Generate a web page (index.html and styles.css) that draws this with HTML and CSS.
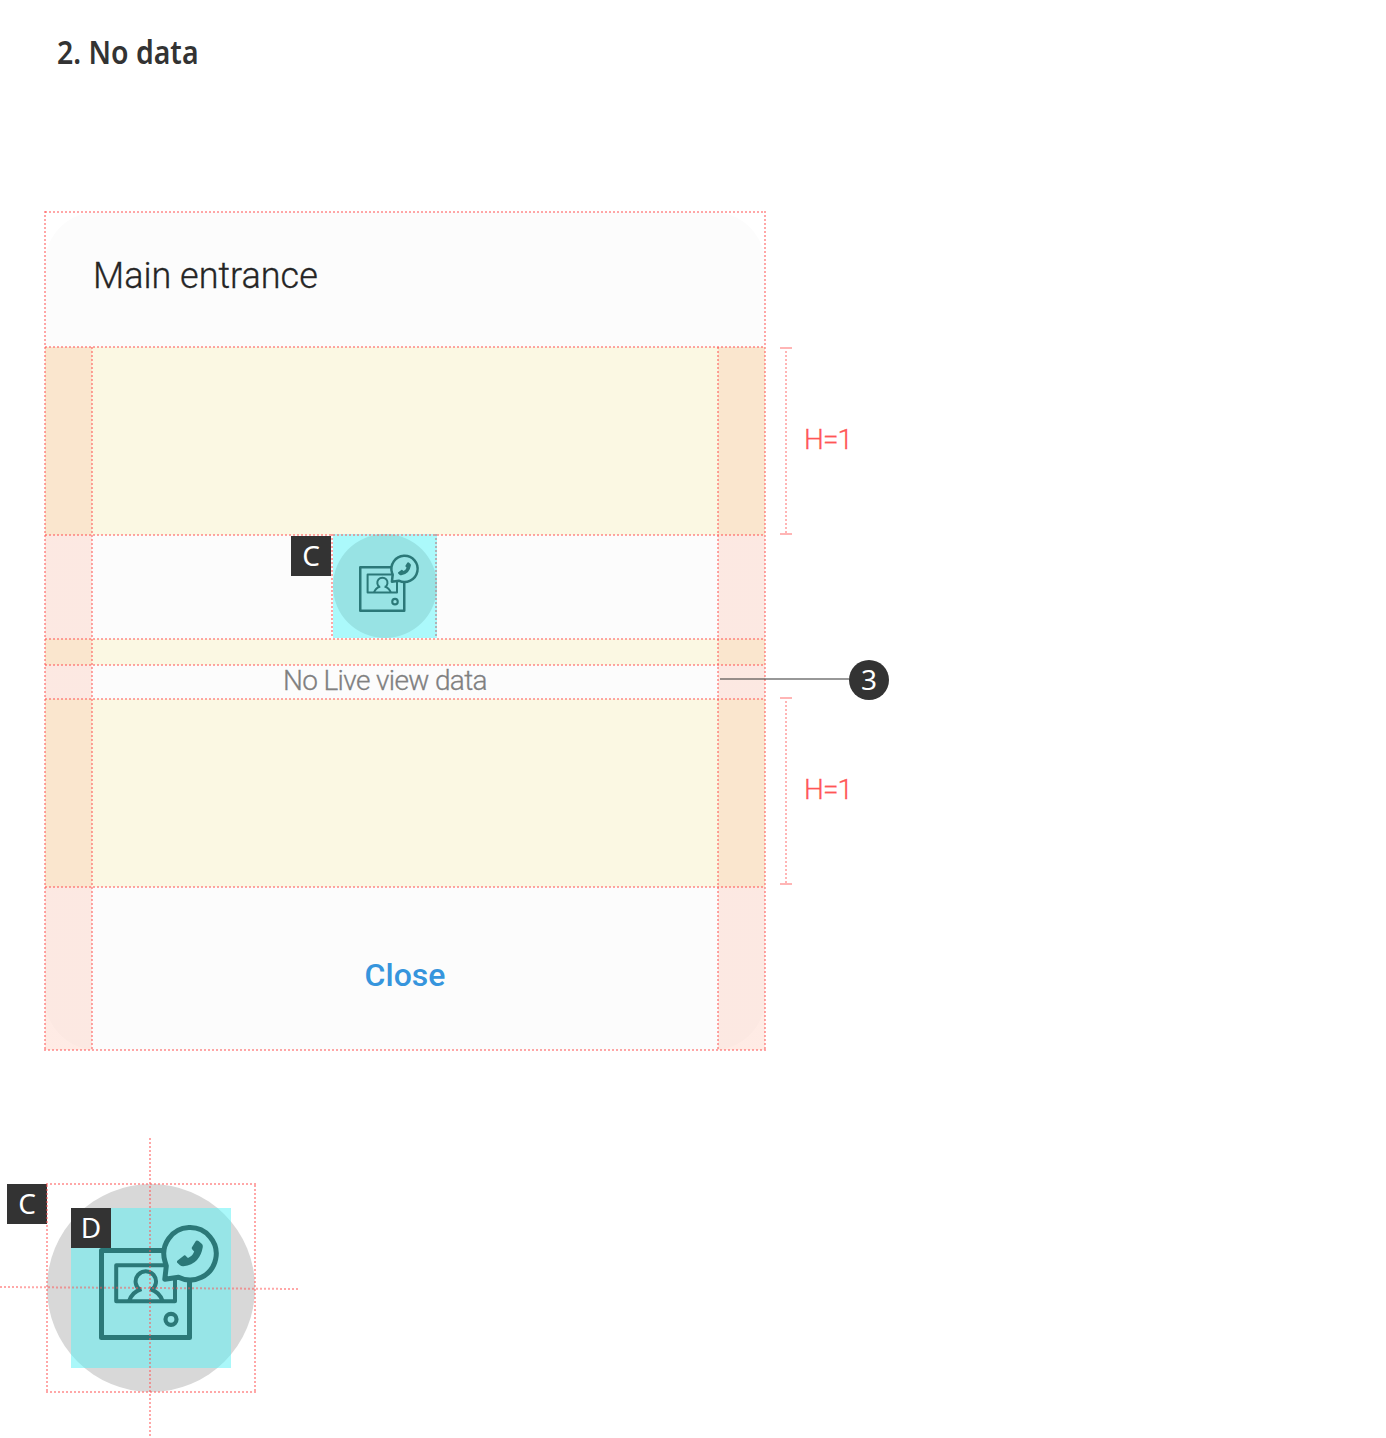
FILE: index.html
```html
<!DOCTYPE html>
<html lang="en">
<head>
<meta charset="utf-8">
<title>No data</title>
<link rel="stylesheet" href="styles.css">
</head>
<body>
<svg class="defs" aria-hidden="true">
  <symbol id="doorphone" viewBox="0 0 160 160">
    <g fill="none" stroke="#2b7878" stroke-linejoin="round">
      <path stroke-width="5" d="M92 42.5H30.5V129.5H118.5V73"/>
      <path stroke-width="4" d="M97 57.2H45.2V93.2H104V71"/>
      <path stroke-width="4" d="M69.5 82.2A10.2 10.2 0 1 1 80.1 82.2M70.5 81Q61 84 58 93.2M79.1 81Q88.500 84 91.700 93.2"/>
      <circle stroke-width="4.2" cx="100" cy="111.3" r="5.5"/>
      <path stroke-width="5" d="M107.5 69.3A26.2 26.2 0 1 0 94 53.5L95.3 58 93.8 71.3Z"/>
    </g>
    <path fill="#2b7878" d="M106 53L113.3 47.3Q114.7 47 115.8 49L117 50Q121.5 48 123.2 43.5L121.5 41.7Q120.3 40.5 120.8 39.5L124.5 33.5Q125.5 32 127.5 33L131 36Q132 37 131.8 39Q130.5 47 126 52Q121 57.5 112.5 58.3Q110.5 58.5 109 57.3L106 54.5Z"/>
  </symbol>
</svg>

<h1 class="heading"><span>2. No data</span></h1>

<main class="board">
  <div class="surface"></div>
  <header class="row row-title">Main entrance</header>
  <div class="row space banded"></div>
  <div class="row banded row-icon">
    <span class="tag">C</span>
    <div class="icon-box">
      <div class="disc"></div>
      <svg class="icon"><use href="#doorphone"/></svg>
    </div>
  </div>
  <div class="row space banded"></div>
  <div class="row banded row-text"><span>No Live view data</span></div>
  <div class="row space banded"></div>
  <footer class="row banded row-close"><span>Close</span></footer>
  <div class="measure measure-top"><i class="ruler"></i><span>H=1</span></div>
  <div class="callout"><i class="leader"></i><b class="number">3</b></div>
  <div class="measure measure-bottom"><i class="ruler"></i><span>H=1</span></div>
  <div class="guides"></div>
</main>

<section class="detail">
  <span class="tag">C</span>
  <div class="detail-box">
    <div class="target">
      <svg class="icon"><use href="#doorphone"/></svg>
      <span class="tag tag-corner">D</span>
    </div>
    <div class="frame"></div>
    <svg class="cross" width="298" height="298" viewBox="0 0 298 298">
      <path d="M150 0V298" />
      <path d="M0 149L298 151" />
    </svg>
  </div>
</section>
</body>
</html>
```
FILE: styles.css
```css
* { box-sizing: border-box; }

body {
  --line: rgba(255, 80, 80, .5);
  --band: rgba(252, 90, 38, .12);
  --dots-x: repeating-linear-gradient(90deg, var(--line) 0 2px, transparent 2px 4px);
  --dots-y: repeating-linear-gradient(var(--line) 0 2px, transparent 2px 4px);
  margin: 0;
  height: 1438px;
  overflow: hidden;
  background: #fff;
  font-family: Roboto, "Liberation Sans", sans-serif;
}

.defs { display: block; width: 0; height: 0; }

.heading {
  height: 212px;
  margin: 0;
  padding: 30px 0 0 57px;
  color: #333;
  font: 600 32px/44px "Noto Sans", sans-serif;
}

.heading span {
  display: inline-block;
  transform: scaleX(.888);
  transform-origin: left;
}

.board {
  position: relative;
  display: grid;
  grid-template-columns: 720px 1fr;
  grid-template-rows: 135px 188px 104px 26px 34px 188px 163px;
  margin-left: 45px;
}

.surface {
  grid-column: 1;
  grid-row: 1 / 8;
  border-radius: 52px;
  background: #fcfcfc;
}

.row { position: relative; grid-column: 1; display: flex; align-items: center; }
.row:nth-child(2) { grid-row: 1; }
.row:nth-child(3) { grid-row: 2; }
.row:nth-child(4) { grid-row: 3; }
.row:nth-child(5) { grid-row: 4; }
.row:nth-child(6) { grid-row: 5; }
.row:nth-child(7) { grid-row: 6; }
.row:nth-child(8) { grid-row: 7; }

.row::before {
  content: "";
  position: absolute;
  inset: -1px 0 auto;
  height: 2px;
  background: var(--dots-x);
  z-index: 2;
}

.banded {
  background: linear-gradient(90deg, var(--band) 47px, transparent 47px 673px, var(--band) 673px);
}

.space { --band: #fae6ce; background-color: #fbf8e3; }

.row-title {
  padding: 0 0 7px 48px;
  color: #252525;
  font-size: 36px;
  font-weight: 300;
  -webkit-text-stroke: .3px;
}

.row-icon { align-items: flex-start; padding-left: 246px; }
.row-icon .tag { margin: 1px 2px 0 0; }

.tag {
  flex: none;
  width: 40px;
  height: 40px;
  background: #333;
  color: #fff;
  text-align: center;
  font: 400 28px/38px "Noto Sans", sans-serif;
}

.icon-box {
  position: relative;
  display: grid;
  place-items: center;
  width: 104px;
  height: 104px;
  margin-top: -1px;
  background: #abf9fb;
}

.icon-box::before, .icon-box::after {
  content: "";
  position: absolute;
  top: 0;
  bottom: 0;
  width: 2px;
  background: var(--dots-y);
}
.icon-box::before { left: -2px; }
.icon-box::after { right: 0; background: repeating-linear-gradient(rgba(180, 130, 135, .6) 0 2px, transparent 2px 4px); }

.disc, .icon-box .icon { grid-area: 1 / 1; }
.disc { width: 104px; height: 104px; border-radius: 50%; background: #98e3e4; }
.icon-box .icon { width: 80px; height: 80px; }

.row-text {
  padding: 0 0 4px 238px;
  color: #808080;
  font-size: 28px;
  font-weight: 300;
  letter-spacing: -.64px;
  -webkit-text-stroke: .3px;
}
.row-close { justify-content: center; color: #3695dd; font-size: 32px; font-weight: 500; }
.row-close span { margin-top: 13px; }

.guides {
  position: absolute;
  left: -1px;
  top: -1px;
  width: 722px;
  height: 840px;
  background:
    var(--dots-y) 0 0 / 2px 100% no-repeat,
    var(--dots-y) 720px 0 / 2px 100% no-repeat,
    var(--dots-y) 47px 136px / 2px 704px no-repeat,
    var(--dots-y) 673px 136px / 2px 704px no-repeat,
    var(--dots-x) 0 838px / 100% 2px no-repeat;
}

.measure {
  grid-column: 2;
  display: flex;
  align-items: center;
  gap: 12px;
  height: 188px;
  padding-left: 15px;
  color: #ff5656;
  font-size: 28px;
  font-weight: 300;
  letter-spacing: -.9px;
  -webkit-text-stroke: .3px;
}
.measure-top { grid-row: 2; }
.measure-bottom { grid-row: 6; margin-top: -2px; }
.measure span { margin-top: -3px; }

.ruler {
  width: 12px;
  height: 188px;
  background:
    linear-gradient(#ffb5b5, #ffb5b5) 0 0 / 12px 2px no-repeat,
    linear-gradient(#ffb5b5, #ffb5b5) 0 100% / 12px 2px no-repeat,
    repeating-linear-gradient(#ffb5b5 0 2px, transparent 2px 4px) 5px 0 / 2px 100% no-repeat;
}

.callout {
  position: relative;
  z-index: 3;
  grid-column: 2;
  grid-row: 5;
  display: flex;
  height: 40px;
  margin: -5px 0 0 -45px;
}
.leader { width: 129px; height: 2px; margin-top: 18px; background: rgba(50, 50, 50, .5); }
.number {
  width: 40px;
  height: 40px;
  border-radius: 50%;
  background: #333;
  color: #fff;
  text-align: center;
  font: 400 28px/38px "Noto Sans", sans-serif;
}

.detail { display: flex; padding: 134px 0 0 7px; }

.detail-box {
  position: relative;
  display: grid;
  place-items: center;
  width: 208px;
  height: 208px;
  border-radius: 50%;
  background: #d8d8d8;
}

.target {
  position: relative;
  width: 160px;
  height: 160px;
  background: rgba(86, 242, 246, .5);
}
.target .icon { display: block; width: 160px; height: 160px; }
.tag-corner { position: absolute; left: 0; top: 0; }

.frame {
  position: absolute;
  inset: -1px;
  background:
    var(--dots-x) 0 0 / 100% 2px no-repeat,
    var(--dots-x) 0 100% / 100% 2px no-repeat,
    var(--dots-y) 0 2px / 2px 206px no-repeat,
    var(--dots-y) 100% 2px / 2px 206px no-repeat;
}

.cross {
  position: absolute;
  left: -47px;
  top: -46px;
  fill: none;
  stroke: rgba(255, 80, 80, .5);
  stroke-width: 2;
  stroke-dasharray: 2 2;
}
```
